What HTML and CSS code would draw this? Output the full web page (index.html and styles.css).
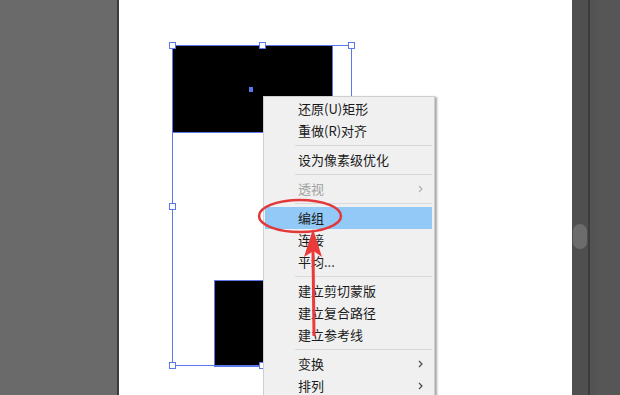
FILE: index.html
```html
<!DOCTYPE html>
<html lang="zh-CN">
<head>
  <meta charset="utf-8">
  <title>编组</title>
  <link rel="stylesheet" href="styles.css">
</head>
<body>
  <div class="workspace">
    <div class="pasteboard-left"></div>

    <div class="artboard">
      <!-- artwork on the free canvas -->
      <div class="shape shape-top"></div>
      <div class="shape shape-bottom"></div>
      <div class="bbox">
        <span class="handle h-tl"></span>
        <span class="handle h-tm"></span>
        <span class="handle h-tr"></span>
        <span class="handle h-ml"></span>
        <span class="handle h-bl"></span>
        <span class="handle h-bm"></span>
      </div>
      <span class="center-point"></span>

      <ul class="context-menu">
        <li class="item">还原(U)矩形</li>
        <li class="item">重做(R)对齐</li>
        <li class="sep"></li>
        <li class="item">设为像素级优化</li>
        <li class="sep"></li>
        <li class="item disabled">透视<svg class="chev" viewBox="0 0 5 8"><path d="M1 1l3 3-3 3" /></svg></li>
        <li class="sep"></li>
        <li class="item active">编组</li>
        <li class="item">连接</li>
        <li class="item">平均...</li>
        <li class="sep"></li>
        <li class="item">建立剪切蒙版</li>
        <li class="item">建立复合路径</li>
        <li class="item">建立参考线</li>
        <li class="sep"></li>
        <li class="item">变换<svg class="chev" viewBox="0 0 5 8"><path d="M1 1l3 3-3 3" /></svg></li>
        <li class="item">排列<svg class="chev" viewBox="0 0 5 8"><path d="M1 1l3 3-3 3" /></svg></li>
      </ul>
    </div>

    <div class="pasteboard-right">
      <div class="scroll-track"><div class="scroll-thumb"></div></div>
      <div class="panel-edge"></div>
      <div class="panel-rest"></div>
    </div>
  </div>

  <!-- red annotation drawn over the screenshot -->
  <svg class="annotation" width="620" height="395" viewBox="0 0 620 395">
    <ellipse cx="300" cy="216" rx="41" ry="16" fill="none" stroke="#e2383a" stroke-width="2.5" />
    <line x1="314" y1="336" x2="313" y2="250" stroke="#ea3a3a" stroke-width="3" />
    <path d="M313 229 L322 257 L313.5 251 L304 257 Z" fill="#ea3a3a" />
  </svg>
</body>
</html>
```

FILE: styles.css
```css
html, body {
  margin: 0;
  height: 100%;
}
body {
  font-family: "Noto Sans CJK SC", "Liberation Sans", sans-serif;
  overflow: hidden;
  position: relative;
}
.workspace {
  display: flex;
  height: 395px;
}
.pasteboard-left {
  width: 117px;
  background: #6a6a6a;
  border-right: 2px solid #3b3b3b;
}
.artboard {
  width: 453px;
  background: #fff;
  position: relative;
}
.pasteboard-right {
  flex: 1;
  display: flex;
}
.scroll-track {
  width: 16px;
  background: #4f4f4f;
}
.scroll-thumb {
  margin: 224px 0 0 1px;
  width: 14px;
  height: 25px;
  border-radius: 7px;
  background: #6c6c6c;
}
.panel-edge {
  width: 2px;
  background: #3c3c3c;
}
.panel-rest {
  flex: 1;
  background: #565656;
  border-left: 6px solid #535353;
}

/* artwork */
.shape {
  position: absolute;
  background: #000;
  border: 1px solid #5a78e8;
  box-sizing: border-box;
}
.shape-top {
  left: 53px;
  top: 45px;
  width: 161px;
  height: 88px;
}
.shape-bottom {
  left: 95px;
  top: 280px;
  width: 60px;
  height: 87px;
}
.bbox {
  position: absolute;
  left: 53px;
  top: 45px;
  width: 180px;
  height: 321px;
  border: 1px solid #5a78e8;
  box-sizing: border-box;
}
.handle {
  position: absolute;
  width: 5px;
  height: 5px;
  background: #fff;
  border: 1px solid #5a78e8;
}
.h-tl { left: -4px; top: -4px; }
.h-tm { left: 86px; top: -4px; }
.h-tr { right: -4px; top: -4px; }
.h-ml { left: -4px; top: 157px; }
.h-bl { left: -4px; bottom: -4px; }
.h-bm { left: 86px; bottom: -4px; }
.center-point {
  position: absolute;
  left: 130px;
  top: 87px;
  width: 4px;
  height: 5px;
  background: #5a78e8;
}

/* context menu */
.context-menu {
  position: absolute;
  left: 144px;
  top: 96px;
  width: 172px;
  box-sizing: border-box;
  margin: 0;
  padding: 1px 0 0;
  list-style: none;
  background: #f0f0f0;
  border: 1px solid #cfcfcf;
  box-shadow: 2px 1px 2px rgba(0, 0, 0, 0.35);
}
.item {
  height: 22px;
  line-height: 22px;
  margin: 0 2px 0 1px;
  padding-left: 33px;
  font-size: 13px;
  color: #1a1a1a;
  position: relative;
}
.item.disabled {
  color: #a0a0a0;
}
.item.active {
  background: #92c9f7;
}
.chev {
  position: absolute;
  right: 9px;
  top: 7px;
  width: 5px;
  height: 8px;
  fill: none;
  stroke: #4a4a4a;
  stroke-width: 1.2;
}
.disabled .chev {
  stroke: #b0b0b0;
}
.sep {
  height: 1px;
  margin: 3px 2px 3px 31px;
  background: #d9d9d9;
  border-bottom: 0;
}

.annotation {
  position: absolute;
  left: 0;
  top: 0;
  pointer-events: none;
}
```
